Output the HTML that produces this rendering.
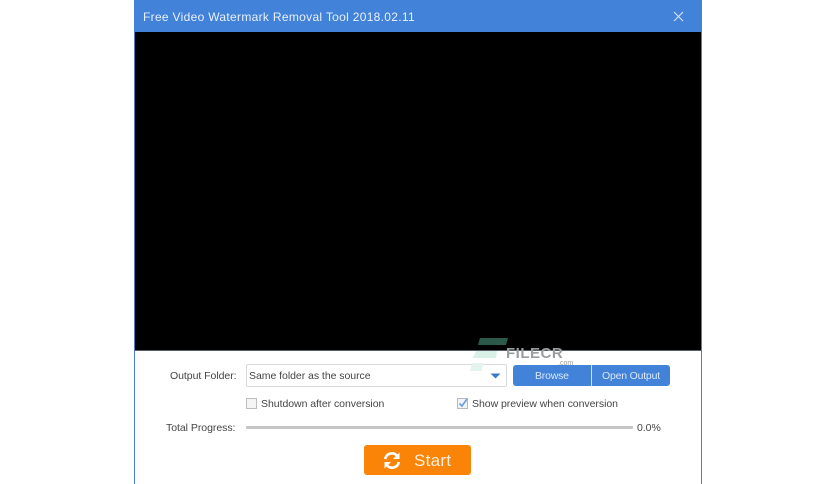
<!DOCTYPE html>
<html><head><meta charset="utf-8">
<style>
html,body{margin:0;padding:0;background:#fff}
#p{position:relative;width:836px;height:484px;overflow:hidden;background:#fff;font-family:"Liberation Sans",sans-serif;color:#444;filter:blur(.3px)}
#p div,#p span{position:absolute;white-space:nowrap}
.t{font-size:10.5px;line-height:14px;letter-spacing:-.04px;color:#444}
</style></head><body>
<div id="p">
<div style="left:134px;top:0;width:568px;height:484px;background:#fff;box-sizing:border-box;border-left:1px solid #4a7fd0;border-right:1px solid #4a7fd0"></div>
<div style="left:134px;top:0;width:568px;height:32px;background:#4282d9"></div>
<div class="t" style="left:143px;top:9px;font-size:12px;line-height:16px;letter-spacing:.31px;color:#e8f0fb">Free Video Watermark Removal Tool 2018.02.11</div>
<svg style="position:absolute;left:672px;top:10px" width="13" height="13"><path d="M2 2L11 11M11 2L2 11" stroke="#cfe0f7" stroke-width="1.2" fill="none"/></svg>
<div style="left:135px;top:32px;width:566px;height:318px;background:#000"></div>
<div style="left:135px;top:350px;width:566px;height:1px;background:#5a6068"></div>

<div class="t" style="left:170px;top:369px">Output Folder:</div>
<div style="left:246px;top:364px;width:261px;height:23px;box-sizing:border-box;border:1px solid #d9d9d9;border-radius:2px;background:#fff"></div>
<div class="t" style="left:249px;top:369px">Same folder as the source</div>
<svg style="position:absolute;left:490px;top:373px" width="12" height="7"><path d="M0.5 0.5H10.5L5.5 5.5Z" fill="#3b78cc"/></svg>

<svg style="position:absolute;left:470px;top:336px" width="40" height="46">
<path d="M10 2H38L36 9H8Z" fill="#2c5a4a"/>
<path d="M6 15H27L26 22H3Z" fill="#d9f0e7"/>
<path d="M2 27H13L12 35H0Z" fill="#e2f4ed"/>
</svg>
<div style="left:506px;top:346px;font-size:15px;line-height:16px;font-weight:bold;letter-spacing:.5px;color:#9a9d9f">FILECR</div>
<div style="left:558px;top:360px;font-size:7px;line-height:8px;color:#9a9a9a">.com</div>

<div style="left:513px;top:365px;width:157px;height:21px;background:#4282d9;border-radius:3px"></div>
<div style="left:591px;top:365px;width:1px;height:21px;background:#cfe0f5"></div>
<div class="t" style="left:535px;top:369px;color:#d8e6f8;letter-spacing:-.2px">Browse</div>
<div class="t" style="left:602px;top:369px;color:#d8e6f8;letter-spacing:-.2px">Open Output</div>

<div style="left:246px;top:398px;width:11px;height:11px;box-sizing:border-box;border:1px solid #bdbdbd;background:#f5f5f5"></div>
<div class="t" style="left:261px;top:397px">Shutdown after conversion</div>
<div style="left:457px;top:398px;width:11px;height:11px;box-sizing:border-box;border:1px solid #b5b9c0;background:#f0f3f8"></div>
<svg style="position:absolute;left:457px;top:397px" width="12" height="12"><path d="M2.5 6.5L5 9L10 2" stroke="#6f9ad8" stroke-width="1.6" fill="none"/></svg>
<div class="t" style="left:472px;top:397px">Show preview when conversion</div>

<div class="t" style="left:166px;top:421px">Total Progress:</div>
<div style="left:246px;top:426px;width:387px;height:3px;background:#c6c6c6;border-radius:1px"></div>
<div class="t" style="left:637px;top:421px">0.0%</div>

<div style="left:364px;top:445px;width:107px;height:30px;background:#f98408;border-radius:3px"></div>
<svg style="position:absolute;left:382px;top:451px" width="20" height="19" viewBox="0 0 20 19">
<path d="M3.2 8A6.8 6.8 0 0 1 15 4.6" stroke="#fff" stroke-width="2.6" fill="none"/>
<path d="M17.5 1.5V8H11Z" fill="#fff"/>
<path d="M16.8 11A6.8 6.8 0 0 1 5 14.4" stroke="#fff" stroke-width="2.6" fill="none"/>
<path d="M2.5 17.5V11H9Z" fill="#fff"/>
</svg>
<div style="left:414px;top:450px;font-size:17px;line-height:21px;letter-spacing:.3px;color:#fdeedd">Start</div>
</div>
</body></html>
